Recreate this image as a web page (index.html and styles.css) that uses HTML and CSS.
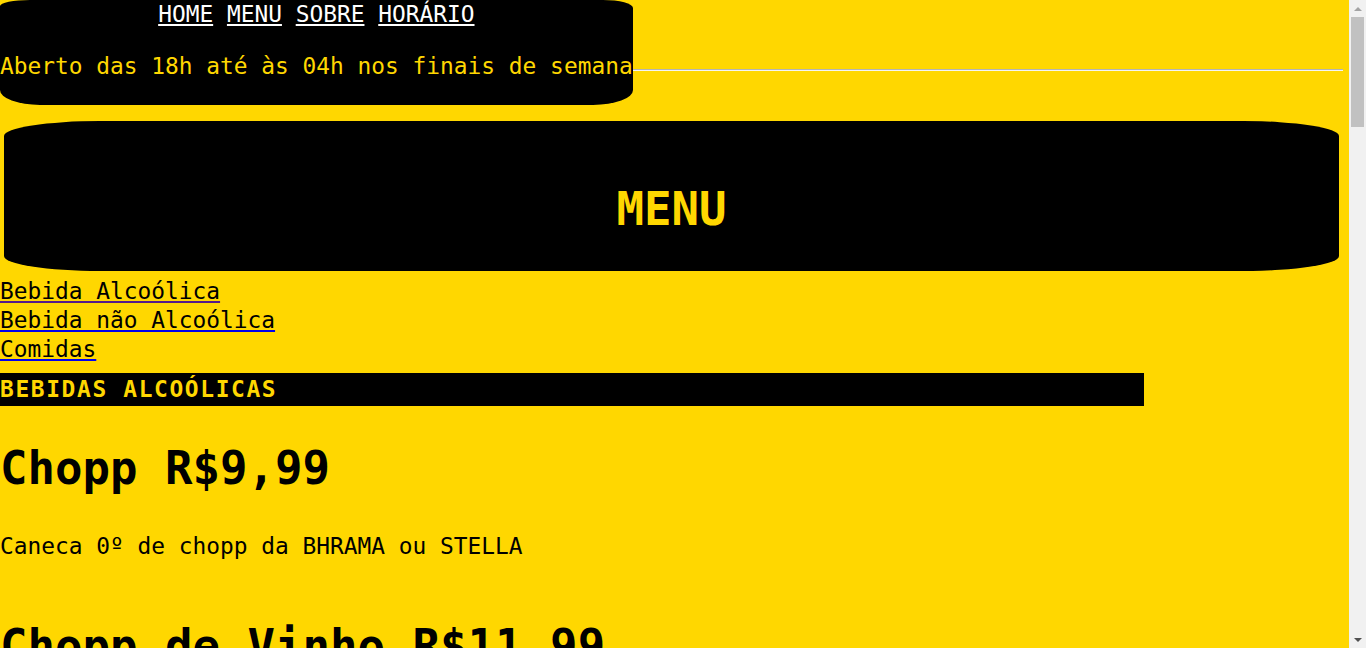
FILE: index.html
```html
<!DOCTYPE html>
<html lang="pt-BR">
<head>
<meta charset="utf-8">
<title>Menu</title>
<link rel="stylesheet" href="styles.css">
</head>
<body>
<div class="pagina">
  <header class="topo">
    <div class="topo-caixa">
      <nav class="nav">
        <a href="#" class="nav-link">HOME</a> <a href="#" class="nav-link">MENU</a> <a href="#" class="nav-link">SOBRE</a> <a href="#" class="nav-link">HORÁRIO</a>
      </nav>
      <p class="horario">Aberto das 18h até às 04h nos finais de semana</p>
    </div>
    <hr class="linha">
  </header>

  <section class="titulo-menu">
    <h1 class="titulo">MENU</h1>
  </section>

  <ul class="categorias">
    <li><a href="#" class="cat-link visitado"><span class="cat-texto">Bebida Alcoólica</span></a></li>
    <li><a href="#" class="cat-link"><span class="cat-texto">Bebida não Alcoólica</span></a></li>
    <li><a href="#" class="cat-link"><span class="cat-texto">Comidas</span></a></li>
  </ul>

  <h2 class="secao">BEBIDAS ALCOÓLICAS</h2>

  <div class="item">
    <h3 class="item-nome">Chopp R$9,99</h3>
    <p class="item-desc">Caneca 0º de chopp da BHRAMA ou STELLA</p>
  </div>
  <div class="item">
    <h3 class="item-nome">Chopp de Vinho R$11,99</h3>
    <p class="item-desc">Caneca 0º de chopp de vinho</p>
  </div>
  <div class="item">
    <h3 class="item-nome">Caipirinha R$14,99</h3>
    <p class="item-desc">Limão, morango ou maracujá</p>
  </div>
</div>

<div class="barra-rolagem" aria-hidden="true">
  <div class="seta seta-cima"></div>
  <div class="trilho"><div class="polegar"></div></div>
  <div class="seta seta-baixo"></div>
</div>
</body>
</html>
```

FILE: styles.css
```css
html, body {
  margin: 0;
  padding: 0;
}
body {
  background: #ffd700;
  color: #000;
  font-family: "DejaVu Sans Mono", "Liberation Mono", monospace;
  font-size: 22.85px;
  line-height: 29px;
}
.pagina {
  width: 1349px;
}

.topo {
  display: flex;
  align-items: flex-start;
}
.topo-caixa {
  background: #000;
  border-radius: 30px 30px 40px 40px / 6px 8px 15px 15px;
  height: 105px;
  box-sizing: border-box;
}
.nav {
  text-align: center;
  height: 29px;
}
.nav-link {
  color: #fff;
  text-decoration: underline;
}
.horario {
  color: #ffd700;
  margin: 23px 0 0;
  white-space: nowrap;
}
.linha {
  flex: 1;
  margin: 69px 6px 0 0;
  border: 0;
  border-top: 1px solid #b4b4b4;
  border-bottom: 1px solid #f4f4f4;
  height: 0;
}

.titulo-menu {
  background: #000;
  margin: 16px 10px 0 4px;
  height: 150px;
  box-sizing: border-box;
  padding-top: 60px;
  border-radius: 96px / 15px;
}
.titulo {
  margin: 0;
  text-align: center;
  color: #ffd700;
  font-size: 45.7px;
  line-height: 58px;
  font-weight: bold;
}

.categorias {
  list-style: none;
  margin: 6px 0 0;
  padding: 0;
}
.cat-link {
  color: #0000ee;
  text-decoration: underline;
  text-decoration-thickness: 2px;
  text-underline-offset: 2px;
}
.cat-link.visitado {
  color: #551a8b;
}
.cat-texto {
  color: #000;
}

.secao {
  background: #000;
  color: #ffd700;
  width: 1144px;
  margin: 9px 0 0;
  font-size: 22.85px;
  line-height: 33px;
  letter-spacing: 1.65px;
  font-weight: bold;
}

.item {
  padding: 34px 0 23px;
}
.item-nome {
  margin: 0 0 34px;
  font-size: 45.7px;
  line-height: 58px;
  font-weight: bold;
}
.item-desc {
  margin: 0;
}

.barra-rolagem {
  position: fixed;
  top: 0;
  right: 0;
  width: 17px;
  height: 100%;
  background: #f1f1f1;
  display: flex;
  flex-direction: column;
}
.seta {
  height: 17px;
  flex: none;
  display: flex;
  align-items: center;
  justify-content: center;
}
.seta::before {
  content: "";
  width: 0;
  height: 0;
  border-left: 4px solid transparent;
  border-right: 4px solid transparent;
}
.seta-cima::before {
  border-bottom: 4px solid #a3a3a3;
}
.seta-baixo::before {
  border-top: 4px solid #505050;
}
.trilho {
  flex: 1;
  padding: 0 2px;
}
.polegar {
  height: 110px;
  background: #c1c1c1;
}
```
